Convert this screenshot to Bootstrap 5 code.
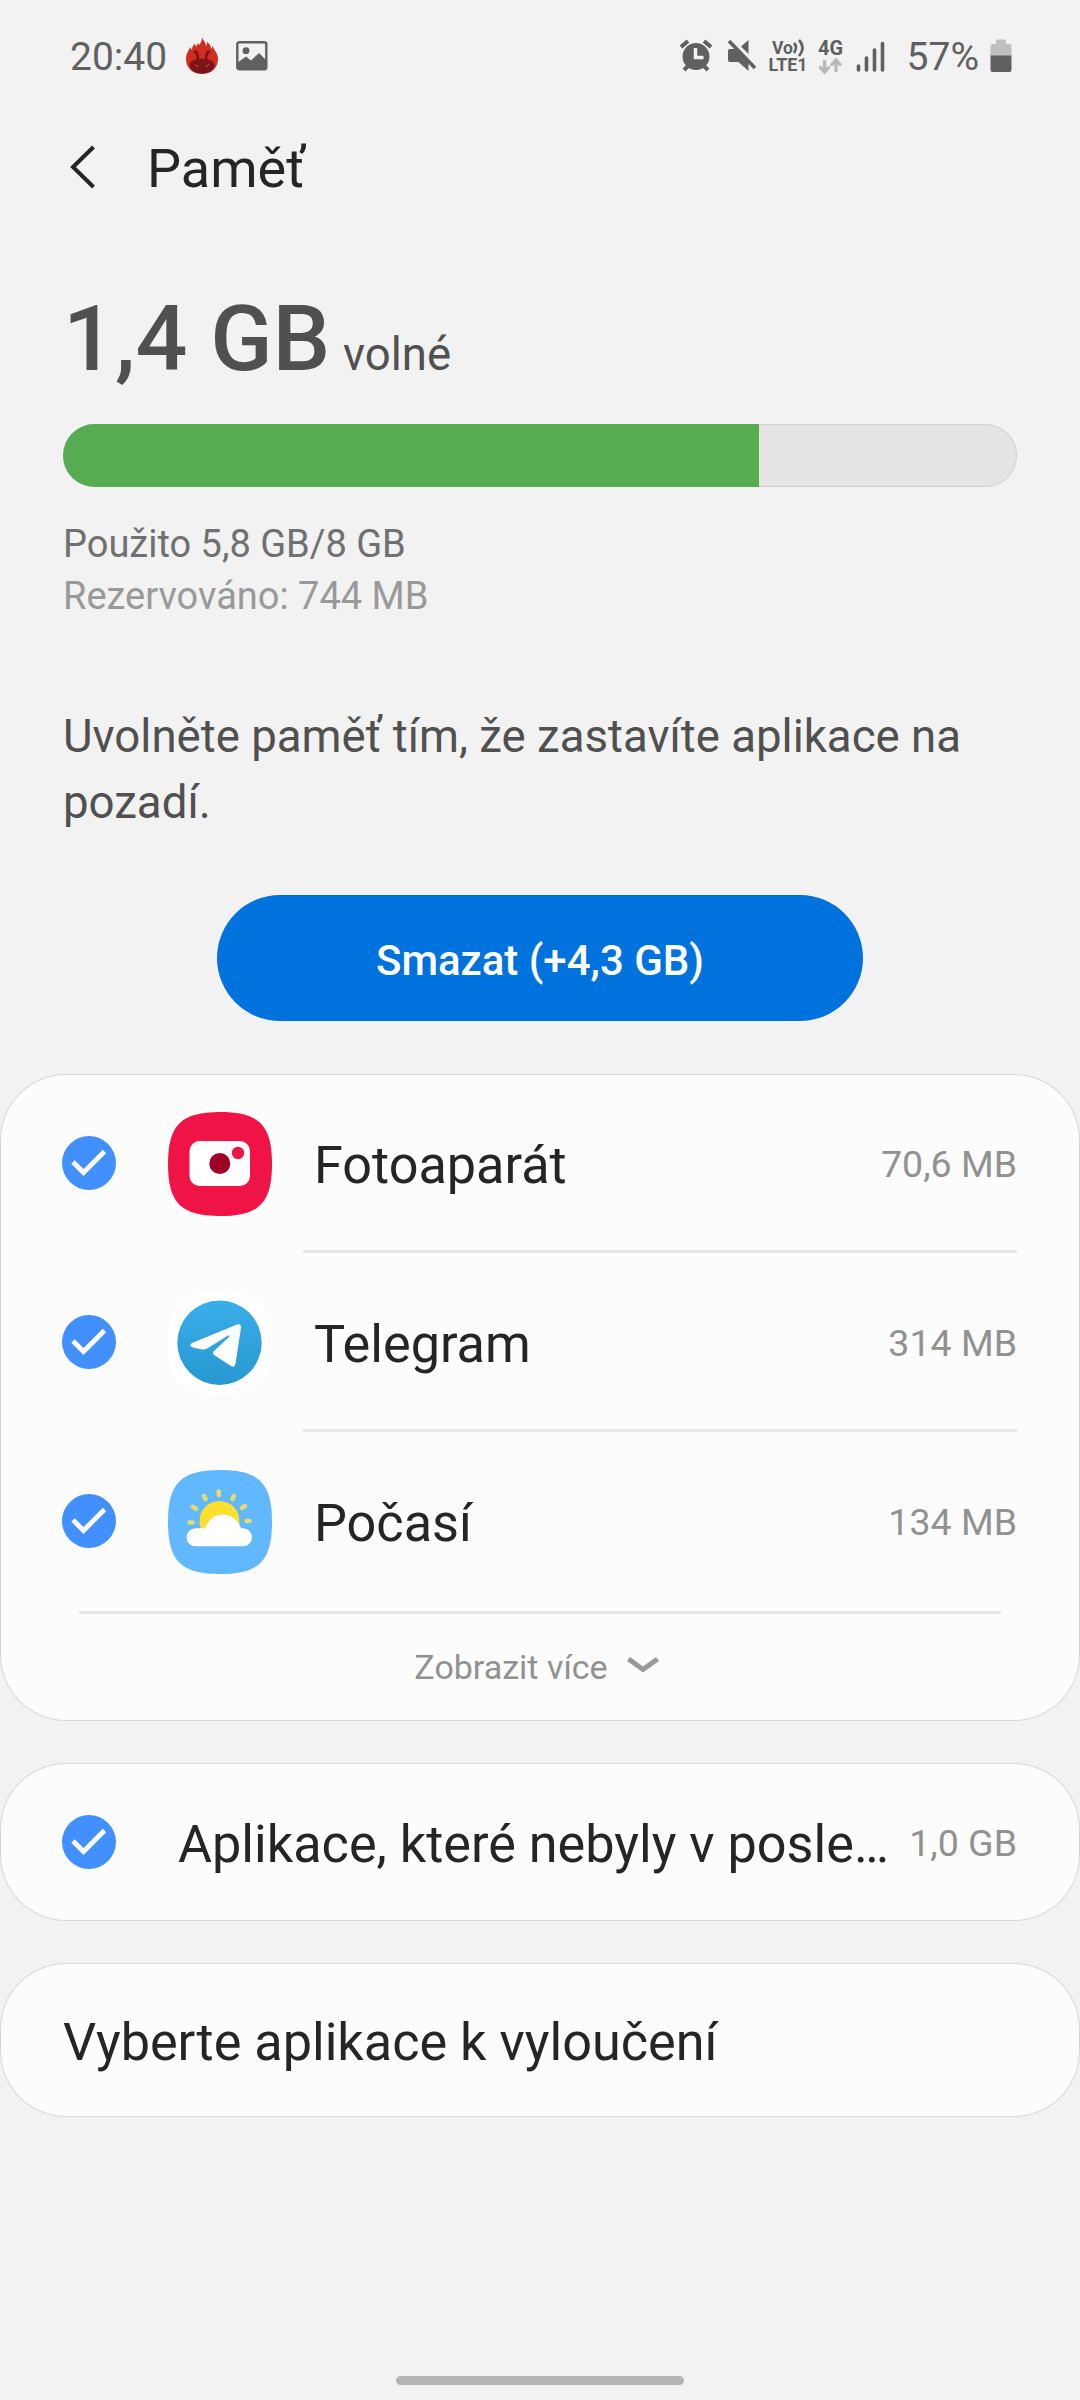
<!DOCTYPE html>
<html lang="cs">
<head>
<meta charset="utf-8">
<meta name="viewport" content="width=device-width, initial-scale=1">
<title>Paměť</title>
<link href="https://cdn.jsdelivr.net/npm/bootstrap@5.3.0/dist/css/bootstrap.min.css" rel="stylesheet">
<style>
body{background:#f2f2f2;font-family:Roboto,"Noto Sans",sans-serif;color:#252525}
svg{display:block;flex:none}
.screen{min-height:2400px;padding-bottom:15px;overflow:hidden}
.status{height:113px;padding:0 68px 0 70px;color:#606060;font-size:39px;line-height:46px}
.status svg{margin-bottom:2px}
.status svg text{font-family:Roboto,sans-serif;font-weight:700;fill:#606060}
.ico-antutu{margin-left:18px}
.ico-picture{margin-left:17px}
.ico-battery{margin-left:11px}
.battery-level{margin-left:-3px}
.appbar{height:112px;padding-left:70px;font-size:54px;line-height:64px}
.appbar svg{margin-bottom:5px}
.appbar-title{margin-left:51px}
.summary{padding:64px 63px 0}
.free{font-size:91.5px;line-height:100px;font-weight:500;color:#505050}
.free-unit{font-size:45.5px;line-height:1;font-weight:400;margin-left:-10px}
.meter{height:63px;border-radius:32px;margin-top:35px;background:#e4e4e4;box-shadow:inset 0 0 0 1px #d0d0d0}
.meter .progress-bar{background:#57ac52}
.usage{font-size:38px;line-height:52px;margin-top:31px;color:#707070}
.usage-muted{color:#999}
.hint{font-size:45.6px;line-height:66px;margin:82px 0 59px;color:#505050}
.btn-clean{width:646px;height:126px;background:#0072de;color:#fff;font-size:42px;font-weight:500;border:0;padding:4px 0 0}
.panels{margin-top:53px}
.panel{background:#fcfcfc;border-radius:66px;box-shadow:inset 0 0 0 1px #d6d6d6;margin-bottom:42px}
.tick{margin-bottom:1px}
.app-row{height:179px;padding:0 63px 0 62px}
.app-icon{margin-left:51.5px;margin-right:31.5px}
.app-main{padding:7px 0 0 11px;border-bottom:3px solid #e6e6e6}
.app-last{border-bottom-color:transparent}
.app-name{font-size:52.2px;line-height:60px}
.app-size{font-size:37.5px;line-height:44px;color:#919191;margin-bottom:3px}
.more{height:110px;margin:0 79px;padding-right:6px;border-top:3px solid #e6e6e6;color:#919191;font-size:34px}
.more svg{margin:0 0 5px 18px}
.panel-unused{height:158px;padding:0 63px 0 62px}
.unused-main{margin-left:62px;padding-top:5px}
.panel-exclude{height:154px;padding:5px 63px 0}
.home{width:288px;height:9px;border-radius:5px;background:#b5b5b5}
</style>
</head>
<body>
<div class="screen d-flex flex-column">
  <header class="status d-flex align-items-center justify-content-between">
    <div class="d-flex align-items-center">
      <span>20:40</span>
      <svg class="ico-antutu" width="34" height="38" viewBox="0 0 34 38">
        <path d="M17 0c1 4 4 5 4 9 1-1 1-2 1-4 3 2 4 4 4 7l2-3c0 4 5 6 5 13 0 9-7 15-16 15S1 31 1 22c0-6 3-8 4-12l2 3c0-3 1-5 3-6l1 3 2-4 1 2c2-2 3-4 3-8z" fill="#cf2e20"/>
        <path d="M13 23c-.5-3 0-6-1.500-7.500-1-1-2-.5-2.500 0M21 23c.5-3 0-6 1.500-7.500 1-1 2-.5 2.500 0" fill="none" stroke="#7a151b" stroke-width="2.600"/>
        <path d="M17 21.500c7 0 12.500 3 12.500 7-1 5-6 8-12.500 8S5.500 33.500 4.500 28.500c0-4 5.500-7 12.500-7z" fill="#7a151b"/>
        <path d="M9.500 27l4.500 2c-1 1.500-4 .5-4.500-2zM24.500 27l-4.500 2c1 1.500 4 .5 4.500-2z" fill="#c43a35"/>
      </svg>
      <svg class="ico-picture" width="32" height="30" viewBox="0 0 32 30">
        <rect x="1.300" y="1.300" width="29" height="27" rx="2" fill="none" stroke="#606060" stroke-width="2.400"/>
        <circle cx="10" cy="9.700" r="3.400" fill="#606060"/>
        <path d="M1 22l9-6.500 5 4 8-7.500 8 8v7a2 2 0 0 1-2 2H3a2 2 0 0 1-2-2z" fill="#606060"/>
      </svg>
    </div>
    <div class="d-flex align-items-center">
      <svg width="232" height="40" viewBox="678 35 232 40">
        <g stroke="#606060" fill="none">
          <path d="M681 46l7-6M711 46l-7-6" stroke-width="4"/>
          <path d="M684 69l6-6M708 69l-6-6" stroke-width="4"/>
          <circle cx="696" cy="55.500" r="13.500" fill="#606060" stroke="none"/>
          <path d="M695.500 47v9.500h8" stroke="#f2f2f2" stroke-width="3.500"/>
          <path d="M729 40l26 27" stroke-width="3.600"/>
        </g>
        <path d="M728 50a2 2 0 0 1 2-2h6l12.500 13v9l-10-9H730a2 2 0 0 1-2-2zM748.500 39v14l-7.500-7.500z" fill="#606060"/>
        <text x="772" y="52.500" font-size="18" textLength="21" lengthAdjust="spacingAndGlyphs">Vo</text>
        <path d="M794 42q4 4 0 10M799 39q7 7.500 0 16" fill="none" stroke="#606060" stroke-width="2.600"/>
        <text x="768.500" y="70" font-size="18.500" textLength="39" lengthAdjust="spacingAndGlyphs">LTE1</text>
        <text x="818" y="53.500" font-size="20" textLength="25" lengthAdjust="spacingAndGlyphs">4G</text>
        <path d="M824.500 59v12M819.500 65.500l5 5.500 5-5.500M836 71v-12M831 64.500l5-5.500 5 5.500" fill="none" stroke="#b8b8b8" stroke-width="3.200"/>
        <path d="M858.500 65v4M866.500 57v12M874.500 49v20M882.500 42.500v26.500" stroke="#606060" stroke-width="3.600" stroke-linecap="round"/>
      </svg>
      <span class="battery-level">57%</span>
      <svg class="ico-battery" width="22" height="34" viewBox="0 0 22 34">
        <path d="M6 5V2a1.500 1.500 0 0 1 1.500-1.500h7A1.500 1.500 0 0 1 16 2v3h3.500A2 2 0 0 1 21.500 7v10h-21V7a2 2 0 0 1 2-2z" fill="#bfbfbf"/>
        <path d="M.5 16.500h21v14.500a2 2 0 0 1-2 2h-17a2 2 0 0 1-2-2z" fill="#606060"/>
      </svg>
    </div>
  </header>

  <nav class="appbar d-flex align-items-center">
    <svg width="26" height="44" viewBox="0 0 26 44"><path d="M23.500 2L3 22l20.500 20" fill="none" stroke="#252525" stroke-width="4"/></svg>
    <span class="appbar-title">Paměť</span>
  </nav>

  <section class="summary">
    <div class="free">1,4 GB <span class="free-unit">volné</span></div>
    <div class="meter progress"><div class="progress-bar" style="width:72.96%"></div></div>
    <div class="usage">Použito 5,8 GB/8 GB<div class="usage-muted">Rezervováno: 744 MB</div></div>
    <p class="hint">Uvolněte paměť tím, že zastavíte aplikace na pozadí.</p>
    <div class="text-center"><button class="btn btn-clean rounded-pill">Smazat (+4,3 GB)</button></div>
  </section>

  <svg width="0" height="0" class="position-absolute">
    <defs>
      <symbol id="check" viewBox="0 0 54 54"><circle cx="27" cy="27" r="27" fill="#4190fe"/><path d="M11 26L21.500 36.500 42.500 15.500" fill="none" stroke="#fff" stroke-width="4.800"/></symbol>
      <path id="squircle" d="M52 0C91 0 104 13 104 52S91 104 52 104 0 91 0 52 13 0 52 0z"/>
      <linearGradient id="tg" x1="0" y1="0" x2="0" y2="1"><stop offset="0" stop-color="#3aaeea"/><stop offset="1" stop-color="#2798d0"/></linearGradient>
    </defs>
  </svg>

  <main class="panels">
    <section class="panel">
      <div class="app-row d-flex align-items-center">
        <svg class="tick" width="54" height="54"><use href="#check"/></svg>
        <svg class="app-icon" width="104" height="104" viewBox="0 0 104 104">
          <use href="#squircle" fill="#f01446"/>
          <rect x="21.500" y="29" width="60.500" height="45" rx="10" fill="#fff"/>
          <circle cx="51.800" cy="51.500" r="10.500" fill="#9e0028"/><circle cx="70" cy="41" r="6.200" fill="#e81946"/>
        </svg>
        <div class="app-main d-flex align-items-center justify-content-between flex-grow-1 align-self-stretch"><span class="app-name">Fotoaparát</span><span class="app-size">70,6 MB</span></div>
      </div>
      <div class="app-row d-flex align-items-center">
        <svg class="tick" width="54" height="54"><use href="#check"/></svg>
        <svg class="app-icon" width="104" height="104" viewBox="0 0 104 104">
          <use href="#squircle" fill="#fff"/>
          <circle cx="51.500" cy="51.700" r="42.200" fill="url(#tg)"/>
          <path d="M24 52L69 33.500q4-1 4 3L67.500 73q-1 4-4.500 2L46 64q-2-2 0-4l15-14q1-2-1-1.500L40 57q-3 2-6 1.500l-9-2q-5-2-1-4.500z" fill="#fff"/>
        </svg>
        <div class="app-main d-flex align-items-center justify-content-between flex-grow-1 align-self-stretch"><span class="app-name">Telegram</span><span class="app-size">314 MB</span></div>
      </div>
      <div class="app-row d-flex align-items-center">
        <svg class="tick" width="54" height="54"><use href="#check"/></svg>
        <svg class="app-icon" width="104" height="104" viewBox="0 0 104 104">
          <use href="#squircle" fill="#61b8ff"/>
          <path d="M50.800 21.500v3.500M36 26l1.500 3M66 26l-1.500 3M25 37l3 1.800M77 36l-3 2M21.500 52.500h3M78.500 51h3" stroke="#e5dc6a" stroke-width="4.600" stroke-linecap="round"/>
          <circle cx="51.500" cy="51" r="20" fill="#ffdf2e"/>
          <path d="M27.500 76.300a9 9 0 0 1 0-18h9.500c3-8 10-13.700 18-13.700s15 5.700 18 13.700h2a9 9 0 0 1 0 18z" fill="#fff"/>
        </svg>
        <div class="app-main app-last d-flex align-items-center justify-content-between flex-grow-1 align-self-stretch"><span class="app-name">Počasí</span><span class="app-size">134 MB</span></div>
      </div>
      <div class="more d-flex align-items-center justify-content-center">
        <span>Zobrazit více</span>
        <svg width="34" height="20" viewBox="0 0 34 20"><path d="M2.500 4L17 14.500 31.500 4" fill="none" stroke="#999" stroke-width="5"/></svg>
      </div>
    </section>

    <section class="panel panel-unused d-flex align-items-center">
      <svg class="tick" width="54" height="54"><use href="#check"/></svg>
      <div class="unused-main d-flex align-items-center justify-content-between flex-grow-1">
        <span class="app-name text-nowrap">Aplikace, které nebyly v posle…</span>
        <span class="app-size text-nowrap">1,0 GB</span>
      </div>
    </section>

    <section class="panel panel-exclude d-flex align-items-center">
      <span class="app-name">Vyberte aplikace k vyloučení</span>
    </section>
  </main>
  <div class="home mt-auto mx-auto"></div>
</div>
<script src="https://cdn.jsdelivr.net/npm/bootstrap@5.3.0/dist/js/bootstrap.bundle.min.js"></script>
</body>
</html>
